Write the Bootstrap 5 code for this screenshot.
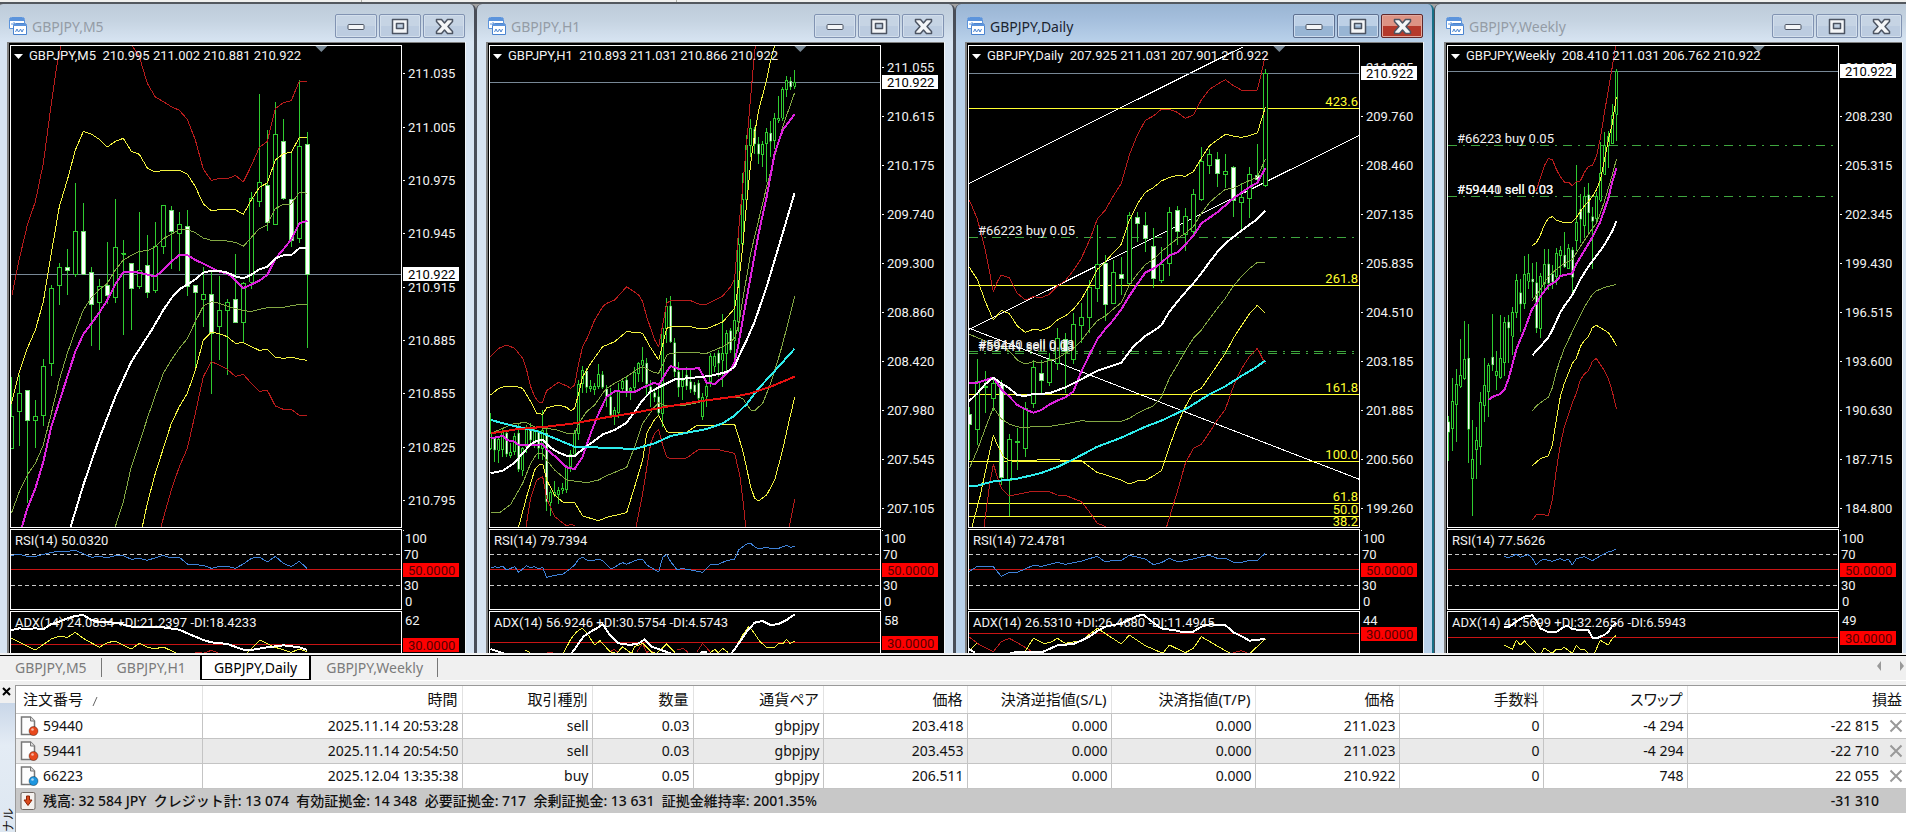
<!DOCTYPE html>
<html lang="ja">
<head>
<meta charset="utf-8">
<meta name="viewport" content="width=device-width, initial-scale=1">
<title>GBPJPY,Daily</title>
<link rel="stylesheet" href="https://cdn.jsdelivr.net/npm/bootstrap@5.3.0/dist/css/bootstrap.min.css">
<script src="https://cdn.jsdelivr.net/npm/bootstrap@5.3.0/dist/js/bootstrap.bundle.min.js"></script>
<style>
body{font-family:"Noto Sans","Noto Sans CJK JP",sans-serif;font-size:14px;line-height:20px;color:#111;background:#fff}
button{font:inherit;color:inherit}
.strip{height:2px;background:#f0f0ee}
.strip span{width:1px;background:#b0b0a8;margin-left:361px}
.strip span+span{margin-left:314px}
.mdi{height:653px;background:#a4a4a4;border-top:2px solid #53585e;border-bottom:2px solid #f4f4f4}
.desk{display:grid;grid-template-columns:repeat(4,minmax(0,1fr));margin:0 -7px 0 -3px;height:649px}
.win{border:solid #484d57;border-width:0 2px 0 1px;border-radius:6px 6px 0 0;background:linear-gradient(#becbd9,#c5d3e1 16px,#d7e4f2 38px);padding:0 9px}
.win.on{background:linear-gradient(#9ab5d3,#a5bfdd 16px,#b9d1ea 38px);border-right-color:#176f86}
.tbar{height:38px;padding-top:10px}
.tico{margin:3px 5px 0 2px}
.cap{color:#949ca6;line-height:26px}
.on .cap{color:#1b2430}
.wbtn{width:42px;height:24px;border:1px solid #8193b2;border-radius:2px;background:linear-gradient(#c6d4e4 50%,#bccce0 50%);box-shadow:inset 0 0 0 1px #d3dfec}
.on .wbtn{border-color:#5e7090;background:linear-gradient(#bdd0e6 50%,#98b5d4 50%);box-shadow:inset 0 0 0 1px #cddcee}
.on .wbtn.shut{border-color:#60272a;background:linear-gradient(#dd9384 50%,#b5392b 50%);box-shadow:inset 0 0 0 1px #e3a99e}
.board{background:#000;border:solid #808080;border-width:1px 0 0 2px;box-shadow:1px 0 #f2f6fa;padding:2px 0 0 1px;height:611px}
.plot{min-width:0}
.axis{width:63px}
.pane{border:1px solid #fff;margin-bottom:1px;overflow:hidden}
.axis .pane{border-color:transparent}
.p1{height:483px}.p2{height:81px}.p3{height:42px;border-bottom:0;margin:0}
.pane svg{display:block;width:100%;height:100%;overflow:hidden}
.axis .pane svg{overflow:visible}
svg text{font-family:Roboto,"Liberation Sans",sans-serif;font-size:13px;fill:#f2f2f2;white-space:pre}
svg .fib{fill:#ffff30;text-anchor:end}
.lines{shape-rendering:crispEdges;fill:none;stroke-linejoin:round}
.tabs{height:25px;border-top:1px solid #000;background:#f0f0f0}
.tab{border:0;background:none;padding:0 14px 0 15px;color:#7b7b7b;height:19px;line-height:19px;margin-top:2px;border-right:1px solid #777;text-decoration:none}
.tab.sel{background:#fff;color:#000;border:solid #000;border-width:0 2px 1px;height:24px;margin-top:0;padding:0 12px;line-height:23px}
.tab.pre{border-right:0}
.splitter{height:5px;background:#f0f0f0;border-top:1px solid #fff}
.side{width:15px;background:linear-gradient(#f0f0f0 18px,#c9d7e8 18px,#e4ecf5 60px,#dde7f1)}
.side button{border:0;background:none;padding:0;height:12px;width:12px}
.side span{writing-mode:vertical-rl;text-orientation:sideways;transform:rotate(180deg);font-family:"Noto Sans CJK JP",sans-serif;font-size:12px;line-height:15px;height:24px}
.term{border-left:1px solid #999;border-top:1px solid #999;min-height:147px}
.deals{table-layout:fixed;width:100%;border-collapse:collapse;white-space:nowrap}
.deals th,.deals td{text-align:right;padding:0 3px 0 4px;font-weight:400;border-right:1px solid #c4c4c4;border-bottom:1px solid #c4c4c4;height:25px;line-height:20px}
.deals th{height:27px;border-right-color:#e2e2e2;padding-right:4px;font-size:15px;font-feature-settings:"palt"}
.deals th:first-child,.deals td:first-child{text-align:left;padding-left:4px}
.deals th:first-child{padding-left:7px}
.deals th:last-child,.deals td:last-child{border-right:0}
.deals tr.alt td{background:#eaeaea}
.deals tfoot td{background:#c8c8c8;border:0;font-weight:500}
.deals .kill{border:0;background:none;padding:0;width:14px;height:14px;margin-left:10px;display:inline-flex}
.deals tfoot td:last-child{padding-right:27px}
.idc{width:20px;height:20px;margin-right:3px}
</style>
</head>
<body class="vh-100 overflow-hidden">
<main class="d-flex flex-column">
<div class="strip d-flex"><span></span><span></span></div>
<div class="mdi overflow-hidden"><div class="desk" id="desk"></div></div>
<nav class="tabs d-flex align-items-start" aria-label="charts">
<a href="#w0" class="tab">GBPJPY,M5</a>
<a href="#w1" class="tab pre">GBPJPY,H1</a>
<a href="#w2" class="tab sel">GBPJPY,Daily</a>
<a href="#w3" class="tab">GBPJPY,Weekly</a>
<svg class="ms-auto" width="34" height="20" aria-hidden="true"><path d="M9 5v10l-4-5zM28 5v10l4-5z" fill="#999"/></svg>
</nav>
<div class="splitter"></div>
<section class="d-flex">
<div class="side d-flex flex-column justify-content-between align-items-center">
<button type="button" aria-label="閉じる" class="d-flex"><svg width="10" height="12"><path d="M1 3l7 7M8 3l-7 7" stroke="#000" stroke-width="2"/></svg></button>
<span>ナル</span>
</div>
<div class="term flex-grow-1">
<table class="deals">
<colgroup><col style="width:186px"><col style="width:260px"><col style="width:130px"><col style="width:101px"><col style="width:130px"><col style="width:144px"><col style="width:144px"><col style="width:144px"><col style="width:144px"><col style="width:144px"><col style="width:144px"><col></colgroup>
<thead><tr><th>注文番号 <svg class="ms-1" width="8" height="12"><path d="M2 11l4-9" stroke="#666"/></svg></th><th>時間</th><th>取引種別</th><th>数量</th><th>通貨ペア</th><th>価格</th><th>決済逆指値(S/L)</th><th>決済指値(T/P)</th><th>価格</th><th>手数料</th><th>スワップ</th><th>損益</th></tr></thead>
<tbody id="rows"></tbody>
<tfoot><tr><td colspan="11"><div class="d-flex align-items-center"><svg class="idc" viewBox="0 0 20 20"><rect x="1" y="1.500" width="14" height="17" rx="1.500" fill="#f4f1ee" stroke="#6f6660"/><path d="M6.500 5h3v4h2.500l-4 5.500-4-5.500h2.500z" fill="#dd4a1c" stroke="#8c2406"/></svg><span style="white-space:pre">残高: 32 584 JPY  クレジット計: 13 074  有効証拠金: 14 348  必要証拠金: 717  余剰証拠金: 13 631  証拠金維持率: 2001.35%</span></div></td><td>-31 310</td></tr></tfoot>
</table>
</div>
</section>
</main>
<script>
// Chart data is kept on a grid of three units per pixel; x starts at `left`, y at 138.
// Candle: x, high, low, body top, body bottom, 1 = falling (filled).
const R='#b81c1c',Y='#f4f440',O='#84a844',M='#dc22dc',W='#fff',A='#2eecec';
const charts=[
{name:'GBPJPY,M5',q:'210.995 211.002 210.881 210.922',left:33,cw:12,tri:964,price:824,
ticks:[[221,'211.035'],[383,'211.005'],[542,'210.975'],[701,'210.945'],[863,'210.915'],[1022,'210.885'],[1180,'210.855'],[1342,'210.825'],[1501,'210.795']],
rsi:'RSI(14) 50.0320',adx:'ADX(14) 24.0834 +DI:21.2397 -DI:18.4233',top:'62',lv:1933,
c:`34,1132,1345,1249,1345,0 58,1125,1338,1180,1235,0 82,1170,1508,1171,1262,1 106,1200,1344,1249,1262,0 130,1077,1278,1098,1247,0 154,855,1127,865,1091,0 178,788,914,802,857,0 202,747,884,802,812,1 226,548,830,694,822,0 250,608,822,694,822,1 274,801,1038,817,913,1 298,836,1050,859,908,0 322,726,912,857,886,1 346,597,908,742,892,0 370,720,1005,760,762,0 394,790,990,790,866,1 418,636,866,812,860,0 442,705,893,796,878,1 466,666,878,740,872,0 490,615,762,616,740,0 514,618,808,631,694,1 538,636,812,673,700,0 562,630,887,679,860,1 586,857,1108,857,878,1 610,800,980,883,899,0 634,815,1181,883,1000,1 658,828,1080,931,980,0 682,897,1125,907,931,0 706,762,968,898,968,1 730,845,1030,850,968,0 754,576,866,595,846,0 778,282,620,547,605,0 802,390,692,555,668,1 826,306,674,403,674,0 850,357,600,424,596,1 874,455,740,598,722,1 898,240,728,439,716,0 922,396,1044,433,824,1`,
l:[[R,3,'36,885 56,785 82,675 106,605 130,490 154,310 170,200 183,136'],
[R,3,'396,136 418,170 442,250 466,291 490,305 514,320 538,331 562,358 586,420 610,508 634,541 658,535 686,535 706,526 730,546 754,497 778,442 802,424 826,326 850,308 874,302 898,243 922,243'],
[Y,3,'34,1212 58,1115 82,1045 106,990 130,905 154,760 178,620 202,540 226,450 250,394 274,402 298,418 322,441 346,424 370,415 394,454 418,463 442,504 466,516 490,511 514,513 538,511 562,522 586,560 610,612 634,632 658,629 706,629 730,643 754,600 778,562 802,549 826,480 850,461 874,457 898,412 922,412'],
[O,3,'34,1540 58,1475 82,1425 106,1390 130,1335 154,1240 178,1140 202,1060 226,992 250,930 274,893 298,868 322,850 346,810 370,780 394,766 418,754 442,752 466,740 490,716 514,703 538,688 562,688 586,698 610,714 634,721 682,723 706,727 730,739 754,712 778,686 802,674 826,626 850,613 874,612 898,577 922,580'],
[O,3,'346,1580 370,1505 394,1400 418,1330 442,1255 466,1185 490,1120 514,1080 538,1045 562,1016 586,965 610,918 634,905 658,910 682,918 706,926 730,932 754,934 778,928 802,923 850,922 898,913 922,913'],
[Y,3,'427,1580 442,1510 466,1420 490,1345 514,1270 538,1220 562,1180 586,1110 610,1020 634,996 658,1001 682,1010 706,1030 730,1028 754,1040 778,1051 802,1048 826,1072 850,1075 874,1072 898,1077 922,1081'],
[R,3,'483,1580 514,1470 538,1400 562,1345 586,1240 610,1130 634,1085 658,1095 682,1108 706,1129 730,1123 754,1150 778,1174 802,1171 826,1218 850,1228 874,1228 898,1246 922,1246'],
[M,6,'66,1580 82,1525 106,1465 130,1385 154,1280 178,1205 202,1130 226,1055 250,1003 298,938 322,900 346,853 370,817 394,816 418,818 442,824 466,829 490,810 514,785 538,765 562,765 586,780 610,791 634,803 658,815 682,820 706,840 730,864 754,854 778,842 802,824 826,776 850,748 874,718 898,670 922,662'],
[W,6,'212,1580 250,1455 298,1315 346,1190 394,1085 455,990 490,930 514,895 538,868 562,853 586,838 610,818 634,812 658,813 682,818 706,829 730,835 754,824 778,808 802,800 826,775 850,766 874,765 898,745 922,743']],
r:'34,1666 58,1663 82,1669 106,1669 154,1657 178,1654 202,1654 226,1651 250,1661 274,1672 298,1669 322,1673 346,1667 370,1667 394,1678 418,1675 442,1681 490,1666 514,1674 538,1672 562,1692 610,1696 634,1705 658,1699 682,1699 706,1705 730,1692 754,1675 778,1671 802,1686 826,1669 850,1690 874,1700 898,1684 922,1706',
a:[[R,3,'585,1959 600,1957 610,1960 634,1951 655,1959'],[Y,3,'34,1915 82,1938 106,1950 154,1917 178,1909 202,1912 226,1897 250,1915 298,1942 322,1928 346,1923 394,1947 418,1930 442,1942 466,1946 490,1941 530,1960'],[Y,3,'740,1960 780,1920 820,1940 874,1957 898,1947 922,1956'],
[W,6,'34,1890 58,1885 82,1887 106,1885 130,1888 154,1872 178,1865 202,1855 226,1848 250,1845 274,1860 298,1866 346,1868 394,1880 490,1882 538,1889 562,1900 610,1920 634,1927 682,1932 730,1949 754,1950 802,1942 850,1936 898,1942 922,1950']]},
{name:'GBPJPY,H1',q:'210.893 211.031 210.866 210.922',left:60,cw:6,tri:991,price:247,
ticks:['211.055','210.615','210.175','209.740','209.300','208.860','208.420','207.980','207.545','207.105'],
rsi:'RSI(14) 79.7394',adx:'ADX(14) 56.9246 +DI:30.5754 -DI:4.5743',top:'58',lv:1927,
c:`62,1240,1350,1300,1345,0 74,1310,1385,1315,1350,1 86,1308,1390,1318,1350,0 98,1285,1370,1298,1348,0 110,1295,1370,1300,1362,1 122,1330,1375,1358,1366,0 134,1300,1365,1308,1355,0 146,1268,1415,1300,1408,1 158,1340,1428,1345,1410,0 170,1275,1358,1285,1340,0 182,1270,1335,1285,1320,1 194,1285,1345,1290,1325,0 206,1290,1378,1295,1345,1 218,1230,1380,1290,1345,0 230,1285,1533,1300,1505,1 242,1470,1548,1478,1506,0 254,1442,1490,1476,1484,0 266,1460,1512,1470,1484,0 278,1450,1482,1465,1470,0 290,1395,1478,1402,1468,0 302,1350,1415,1362,1400,0 314,1290,1370,1300,1362,0 326,1140,1320,1152,1300,0 338,1098,1180,1112,1150,0 350,1103,1178,1114,1162,1 362,1140,1175,1160,1166,0 374,1150,1185,1160,1168,0 386,1093,1168,1124,1160,0 398,1112,1168,1124,1162,1 410,1155,1220,1168,1190,1 422,1165,1248,1190,1245,1 434,1220,1275,1232,1250,0 446,1150,1255,1170,1238,0 458,1138,1180,1145,1165,0 470,1130,1190,1140,1178,1 482,1160,1200,1166,1172,0 494,1100,1175,1118,1162,0 506,1085,1145,1090,1120,0 518,1042,1145,1080,1095,0 530,1075,1190,1090,1152,1 542,1140,1220,1160,1175,1 554,1165,1205,1178,1192,1 566,1165,1245,1190,1238,1 578,980,1280,985,1240,0 590,893,1030,918,985,0 602,888,1030,918,1025,1 614,1015,1130,1028,1115,1 626,1085,1190,1115,1162,1 638,1110,1200,1140,1160,0 650,1100,1170,1125,1158,1 662,1110,1178,1145,1168,1 674,1145,1185,1155,1175,1 686,1140,1205,1150,1195,1 698,1180,1260,1192,1250,0 710,1140,1220,1160,1188,0 722,1060,1160,1070,1145,0 734,1058,1115,1070,1098,0 746,1050,1130,1060,1090,1 758,942,1160,1060,1080,0 770,990,1120,1000,1060,0 782,985,1060,992,1050,1 794,835,1080,960,1020,0 806,690,995,732,965,0 818,520,735,598,732,0 830,405,600,436,598,0 842,357,470,384,436,0 854,382,462,388,432,1 866,412,492,432,462,1 878,422,502,432,464,0 890,385,545,396,430,0 902,362,472,400,424,1 914,340,448,354,422,0 926,288,370,354,360,0 938,262,362,268,354,0 950,228,290,240,268,0 962,232,270,244,260,1 974,210,268,248,258,0`,
l:[[R,3,'62,1070 86,1045 110,1035 134,1045 158,1075 170,1110 182,1160 194,1190 206,1206 218,1206 230,1172 254,1155 266,1147 290,1158 302,1165 314,1155 326,1090 338,1040 350,1018 374,960 398,920 410,910 434,900 470,860 506,885 518,905 530,950 554,1020 566,1040 578,975 590,910 602,902 662,902 686,912 710,912 758,888 782,860 794,835 806,690 818,560 830,430 842,290 850,200 856,136'],
[Y,3,'62,1185 86,1165 110,1158 134,1158 158,1165 182,1205 200,1240 218,1243 230,1223 266,1215 290,1222 302,1232 314,1225 326,1180 338,1130 362,1090 398,1040 434,1025 470,995 506,998 518,1000 540,1040 566,1080 578,1035 590,985 606,978 662,980 686,986 710,986 758,966 794,925 806,850 818,740 830,610 842,490 854,400 866,330 890,240 902,180 914,136'],
[O,3,'62,1300 86,1290 98,1285 134,1270 170,1268 200,1283 230,1285 260,1290 290,1300 314,1302 326,1270 350,1235 374,1215 398,1180 410,1165 434,1150 470,1130 506,1105 518,1100 554,1118 566,1120 578,1095 590,1065 602,1060 650,1057 710,1060 758,1040 782,1025 794,1015 806,975 818,900 842,760 866,660 890,560 914,470 938,380 974,278'],
[O,3,'62,1538 90,1537 122,1513 158,1450 182,1390 200,1362 218,1360 230,1380 254,1410 290,1440 350,1448 386,1440 410,1427 470,1402 494,1340 518,1270 554,1220 566,1208 590,1218 640,1217 710,1202 794,1190 818,1195 842,1230 854,1232 878,1210 902,1150 930,1060 950,985 974,888'],
[Y,3,'146,1580 170,1490 194,1410 206,1395 218,1392 230,1440 254,1485 278,1506 314,1508 338,1548 386,1562 410,1552 470,1538 494,1460 518,1380 530,1300 554,1258 566,1246 578,1270 590,1295 602,1298 650,1297 682,1275 740,1275 794,1273 818,1350 842,1460 854,1495 866,1503 890,1485 914,1440 938,1350 958,1260 974,1192'],
[R,3,'168,1580 182,1495 200,1440 218,1430 230,1495 254,1550 290,1578 302,1573 314,1576'],[R,3,'498,1580 518,1480 542,1330 554,1300 566,1288 578,1335 590,1370 602,1376 650,1374 686,1348 740,1348 794,1360 810,1430 820,1510 827,1580'],[R,3,'958,1580 974,1498'],
[M,6,'62,1315 98,1308 110,1320 134,1325 146,1335 182,1335 218,1333 230,1348 266,1378 290,1402 314,1407 338,1370 362,1300 386,1240 410,1190 434,1174 494,1176 518,1163 554,1148 566,1155 590,1115 602,1098 626,1107 662,1107 686,1104 698,1125 710,1148 734,1152 758,1132 782,1110 794,1085 806,1030 818,960 842,830 866,700 890,590 914,460 938,390 974,343'],
[W,6,'62,1420 98,1412 134,1388 158,1360 182,1333 200,1322 218,1320 242,1343 266,1358 290,1367 314,1368 350,1338 374,1322 398,1303 434,1290 470,1268 494,1235 518,1200 542,1175 590,1150 614,1138 650,1135 720,1128 770,1116 794,1100 806,1070 830,1020 854,965 890,860 914,780 938,700 974,578'],
[A,6,'62,1260 120,1275 206,1295 266,1320 314,1340 398,1343 494,1347 554,1330 602,1308 662,1296 710,1287 758,1270 794,1247 830,1212 866,1165 914,1113 974,1046'],
['#e81010',6,'62,1300 146,1287 230,1280 314,1270 398,1254 494,1238 590,1220 686,1204 794,1190 842,1180 902,1160 974,1130']],
r:'62,1704 74,1700 86,1703 98,1698 110,1710 134,1700 146,1717 170,1697 182,1703 194,1700 206,1707 218,1702 230,1732 254,1726 278,1723 302,1705 314,1695 326,1677 338,1672 350,1680 362,1683 386,1678 398,1682 422,1706 434,1702 446,1693 458,1688 470,1693 494,1682 506,1678 518,1678 530,1695 566,1716 578,1672 590,1664 602,1685 620,1708 638,1706 662,1710 698,1717 722,1694 746,1692 770,1682 794,1677 806,1650 830,1632 842,1630 854,1640 866,1647 890,1641 902,1647 926,1645 950,1636 962,1642 974,1638',
a:[[R,3,'230,1957 250,1958'],[R,3,'420,1956 432,1948 445,1958'],[R,3,'500,1957 518,1930 530,1958 540,1950 550,1958'],[R,3,'620,1950 640,1945 655,1958'],[R,3,'680,1957 698,1930 720,1955'],
[Y,3,'165,1950 180,1957'],[Y,3,'280,1960 302,1918 320,1895 336,1885 350,1898 374,1935 390,1922 420,1955 440,1960 458,1940 470,1950 485,1960 494,1940 518,1930 545,1957 560,1960 590,1932 615,1958'],[Y,3,'720,1958 735,1948 745,1958 758,1945 775,1958'],[Y,3,'790,1955 818,1905 836,1880 850,1895 870,1925 890,1942 914,1942 926,1930 938,1932 950,1918 960,1930 974,1924'],
[W,6,'62,1947 100,1960'],[W,6,'305,1960 340,1910 362,1895 380,1885 398,1873 420,1905 446,1930 480,1935 506,1930 524,1918 545,1940 602,1960'],[W,6,'690,1958 710,1955'],[W,6,'785,1960 810,1925 830,1895 854,1868 878,1863 902,1875 926,1872 950,1860 974,1843']]},
{name:'GBPJPY,Daily',on:1,q:'207.925 211.031 207.901 210.922',left:57,cw:12,tri:988,price:220,
ticks:['211.085','209.760','208.460','207.135','205.835','204.510','203.185','201.885','200.560','199.260'],
rsi:'RSI(14) 72.4781',adx:'ADX(14) 26.5310 +DI:26.4680 -DI:11.4945',top:'44',lv:1900,
fib:[[325,'423.6'],[856,'261.8'],[1183,'161.8'],[1384,'100.0'],[1510,'61.8'],[1549,'50.0'],[1585,'38.2']],
ord:[[712,'#66223 buy 0.05'],[1055,'#59440 sell 0.03'],[1060,'#59441 sell 0.03']],
trend:['58,550 880,140','58,988 1228,406','58,985 1228,1438'],
c:`58,1220,1380,1243,1273,1 82,1077,1335,1143,1288,0 106,1112,1240,1160,1162,0 130,1130,1232,1150,1195,0 154,1140,1455,1153,1433,1 178,1303,1548,1317,1440,0 202,1285,1410,1324,1327,0 226,1205,1370,1225,1345,0 250,1080,1225,1102,1210,0 274,1080,1180,1120,1142,1 298,1060,1158,1078,1148,0 322,985,1110,1015,1090,0 346,998,1180,1018,1053,1 370,938,1093,972,1078,0 394,910,1030,951,976,0 418,840,1000,862,952,0 442,675,906,794,866,0 466,765,962,790,914,1 490,780,912,817,910,0 514,770,884,822,836,1 538,636,852,646,850,0 562,636,726,651,670,1 586,636,755,676,715,1 610,685,863,740,836,1 634,742,848,794,842,0 658,620,828,636,790,0 682,618,735,630,694,1 706,625,752,650,704,0 730,567,708,583,694,0 754,441,604,484,598,0 778,446,521,462,496,0 802,456,560,478,520,1 826,462,564,514,524,0 850,498,650,502,600,1 874,548,688,592,608,0 898,502,654,522,596,0 922,432,550,526,538,1 946,207,560,220,556,0`,
l:[[R,3,'58,600 82,657 106,750 130,875 142,845 154,825 178,833 202,880 226,900 250,890 274,893 298,883 322,858 346,842 370,812 394,775 418,722 442,657 466,630 490,588 514,550 538,465 562,405 586,361 610,348 634,328 658,328 682,337 706,355 730,345 754,300 778,268 802,253 826,239 850,257 874,270 898,273 922,270 934,220 946,165'],
[Y,3,'58,802 82,838 106,905 130,960 154,931 178,941 202,978 226,997 250,988 274,991 298,982 322,960 346,948 370,928 394,898 418,856 442,808 466,785 490,758 514,733 538,660 562,612 586,577 610,563 634,543 658,532 682,526 706,529 730,515 754,475 778,438 802,420 826,403 850,408 874,412 898,407 922,399 946,322'],
[O,3,'58,1003 100,1020 130,1035 154,1040 178,1053 202,1080 226,1092 250,1085 274,1088 298,1082 322,1075 370,1045 394,1022 418,990 442,962 466,948 490,927 514,908 538,855 562,822 586,794 610,778 634,755 658,735 682,716 706,700 730,680 754,640 778,608 802,587 826,568 850,565 874,553 898,542 922,530 946,478'],
[O,3,'58,1405 82,1350 106,1285 130,1222 154,1257 178,1272 202,1280 226,1284 250,1279 298,1279 346,1272 394,1262 442,1266 514,1264 538,1255 562,1240 586,1228 610,1218 634,1192 658,1135 682,1095 706,1053 730,1015 754,990 778,957 802,925 826,895 850,858 874,830 898,806 922,787 946,787'],
[Y,3,'66,1580 90,1490 106,1415 130,1306 142,1335 160,1370 178,1382 226,1381 298,1379 394,1382 418,1400 442,1418 466,1424 490,1432 514,1440 538,1452 562,1443 586,1441 610,1428 634,1412 658,1340 682,1275 706,1220 730,1178 754,1165 778,1130 802,1095 826,1060 850,1015 874,978 898,942 922,916 946,940'],
[R,3,'102,1580 118,1460 130,1393 142,1430 154,1465 178,1488 202,1483 226,1478 250,1474 298,1475 322,1485 346,1486 394,1505 418,1535 442,1570 468,1580'],[R,3,'650,1580 682,1475 706,1390 730,1345 754,1333 778,1298 802,1260 826,1228 850,1160 874,1107 898,1070 922,1045 946,1092'],
[M,6,'56,1150 82,1148 130,1133 154,1168 178,1190 202,1215 226,1228 250,1238 274,1230 298,1214 322,1202 346,1192 370,1175 394,1115 418,1065 442,1018 466,987 490,960 514,928 538,888 562,852 586,818 610,806 634,788 658,767 682,757 706,733 730,708 754,670 802,637 850,595 898,562 922,548 946,505'],
[W,6,'56,1205 82,1180 106,1152 130,1133 154,1150 178,1165 202,1185 226,1188 250,1182 298,1180 346,1162 394,1138 442,1112 514,1088 550,1040 586,1008 610,993 634,976 658,935 682,905 706,877 730,850 754,820 778,787 802,756 826,730 874,692 922,657 946,632'],
[A,6,'56,1458 82,1457 130,1444 202,1436 274,1419 322,1401 370,1378 442,1340 514,1313 586,1280 634,1262 706,1228 778,1183 826,1159 874,1128 910,1107 946,1082']],
r:'58,1714 82,1699 106,1701 130,1700 142,1715 154,1729 178,1717 202,1717 250,1696 274,1699 322,1687 346,1693 370,1688 394,1684 418,1676 442,1669 466,1686 490,1681 514,1681 538,1666 586,1677 610,1694 634,1688 658,1675 682,1685 706,1682 754,1671 778,1666 802,1675 826,1675 850,1687 874,1687 898,1681 922,1681 946,1660',
a:[[R,3,'56,1910 90,1935 130,1955 154,1925 178,1915 202,1928 250,1957'],[R,3,'850,1958 874,1952 890,1958'],
[Y,3,'56,1955 80,1930'],[Y,3,'225,1955 250,1915 280,1930 300,1928 322,1915 346,1930 394,1922 442,1885 514,1932 538,1905 586,1937 634,1958 640,1958 658,1935 706,1958 730,1945 754,1910 802,1938 840,1960'],[Y,3,'900,1960 946,1917'],
[W,6,'56,1947 75,1958'],[W,6,'180,1958 226,1956 280,1955 322,1936 370,1932 394,1922 418,1910 442,1893 466,1880 514,1870 562,1848 580,1844 610,1868 634,1885 682,1892 700,1897 730,1895 754,1880 778,1873 826,1875 850,1897 874,1908 898,1922 946,1917']]},
{name:'GBPJPY,Weekly',q:'208.410 211.031 206.762 210.922',left:66,cw:6,tri:998,price:214,
ticks:['211.145','208.230','205.315','202.345','199.430','196.515','193.600','190.630','187.715','184.800'],
rsi:'RSI(14) 77.5626',adx:'ADX(14) 41.5699 +DI:32.2656 -DI:6.5943',top:'49',lv:1912,
ord:[[436,'#66223 buy 0.05'],[590,'#59440 sell 0.03'],[590,'#59441 sell 0.03']],
c:`67,1248,1382,1265,1297,1 79,1134,1352,1203,1286,0 91,1108,1325,1153,1213,0 103,1018,1165,1125,1158,0 115,964,1140,1078,1136,0 127,972,1388,1075,1288,1 139,1260,1548,1378,1436,0 151,1282,1436,1320,1348,0 163,1175,1394,1206,1340,0 175,1075,1266,1156,1216,0 187,1090,1250,1096,1175,0 199,942,1112,1072,1094,1 211,1053,1170,1114,1126,0 223,946,1136,1075,1133,0 235,950,1128,966,1088,0 247,945,1088,966,984,1 259,922,1065,938,1008,0 271,822,955,840,938,0 283,836,995,878,912,1 295,768,928,822,910,0 307,762,868,820,843,0 319,790,893,838,845,1 331,785,998,848,984,1 343,818,1013,828,986,0 355,746,880,792,850,0 367,748,870,792,850,1 379,795,866,822,845,1 391,744,855,760,830,0 403,737,828,752,766,0 415,696,805,766,800,1 427,733,808,745,806,0 439,740,885,750,832,1 451,495,752,668,722,0 463,583,730,628,658,1 475,560,715,590,676,0 487,548,700,584,638,1 499,620,808,650,664,1 511,575,672,588,656,0 523,425,605,520,600,0 535,397,525,436,522,0 547,392,505,410,436,0 559,312,432,345,430,0 571,207,424,214,342,0`,
l:[[R,3,'319,570 331,572 343,535 355,497 367,476 379,478 391,508 403,530 415,546 427,546 439,558 451,545 463,543 475,518 487,500 499,496 511,470 523,415 535,340 547,270 559,200 569,138'],
[Y,3,'319,737 331,728 343,706 355,675 367,655 379,650 391,660 415,669 439,666 451,652 475,618 499,590 511,570 523,540 535,480 547,420 559,370 571,292'],
[O,3,'319,903 343,868 367,830 391,808 415,790 439,778 463,740 487,703 511,670 523,640 535,605 547,565 559,525 571,478'],
[O,3,'319,1232 331,1218 355,1200 367,1192 379,1163 391,1115 403,1078 415,1045 439,995 451,970 475,922 499,883 511,873 535,862 571,853'],
[Y,3,'319,1397 343,1376 367,1368 379,1335 391,1260 403,1190 415,1150 439,1090 451,1075 463,1040 475,1022 487,1010 499,983 511,976 535,990 547,998 559,1015 571,1037'],
[R,3,'319,1560 331,1544 355,1544 367,1548 379,1500 391,1410 403,1335 415,1280 439,1208 451,1180 463,1140 475,1122 487,1112 499,1085 511,1075 523,1093 535,1112 547,1135 559,1175 571,1226'],
[M,6,'187,1200 199,1191 223,1182 235,1170 247,1138 259,1095 271,1048 295,990 319,925 331,912 343,890 367,858 391,843 403,828 439,820 451,792 475,752 499,712 523,665 547,595 559,545 571,505'],
[W,6,'319,1066 343,1040 367,1012 379,990 403,937 415,918 439,885 463,838 487,800 511,768 535,735 559,693 571,664']],
r:'235,1669 247,1673 259,1669 271,1662 283,1672 307,1664 319,1675 331,1695 343,1682 355,1678 379,1684 403,1676 415,1682 427,1677 439,1695 451,1676 475,1670 499,1682 523,1668 547,1656 559,1653 571,1647',
a:[[Y,3,'235,1935 259,1948 271,1921 283,1935 295,1923 331,1960'],[Y,3,'345,1960 355,1944 379,1960 391,1948 403,1950 415,1942 439,1960 451,1935 463,1948 475,1948 487,1960'],[Y,3,'505,1960 523,1921 547,1935 559,1915 571,1906'],
[W,6,'235,1880 250,1880 271,1865 295,1850 319,1846 331,1862 343,1885 367,1896 391,1896 415,1880 427,1878 439,1888 487,1890 499,1913 511,1915 535,1905 547,1895 559,1878 571,1868']]}
];
const T=[138,1590,1836];
const at=(y,p)=>Math.floor((y-T[p])/3);
const poly=([c,w,p])=>`<polyline stroke="${c}" stroke-width="${w}" points="${p}"/>`;
const lines=(k,p,s)=>`<g class="lines" transform="scale(${1/3}) translate(${-k.left} ${-T[p]})">${s}</g>`;
const hl=(y,c,x='')=>`<line x1="0" x2="100%" y1="${y}.5" y2="${y}.5" stroke="${c}" shape-rendering="crispEdges" ${x}/>`;
const txt=(x,y,s,x2='')=>`<text x="${x}" y="${y}" ${x2}>${s}</text>`;
const tag=(y,s,bg,fg)=>`<rect x="0" y="${y-7}" width="56" height="14" fill="${bg}"/>`+txt(5,y+5,s,`style="fill:${fg}"`);
const candle=(k,d)=>{const[x,h,l,t,b,f]=d.split(',').map(Number),w=k.cw;
 const X=k.left+Math.floor((x-k.left)/3)*3+1.5;
 return `<path d="M${X} ${h}V${t}M${X} ${b}V${l}" stroke="#30cc30" stroke-width="3"/><rect x="${X-w/2}" y="${t}" width="${w}" height="${Math.max(b-t,2)}" fill="${f?'#fff':'#000'}" stroke="${f&&w>6?'#6fe06f':'#30cc30'}" stroke-width="${f&&w<=6?2:3}"/>`};
const mainPane=k=>{let s='';
 s+=lines(k,0,(k.trend||[]).map(p=>poly([W,3,p])).join(''));
 s+=hl(at(k.price,0),'#788896');
 (k.fib||[]).forEach(f=>{if(f[0]<1580)s+=hl(at(f[0],0),'#ffff30')});
 (k.ord||[]).forEach(o=>s+=hl(at(o[0],0),'#3fa63f','stroke-dasharray="9 6 2 6"'));
 s+=lines(k,0,k.c.split(' ').map(d=>candle(k,d)).join('')+k.l.map(poly).join(''));
 s+=`<svg x="100%" overflow="visible" style="overflow:visible">${(k.fib||[]).map(f=>txt(-1,at(f[0],0)-2,f[1],'class="fib"')).join('')}</svg>`;
 (k.ord||[]).forEach(o=>s+=txt(9,at(o[0],0)-2,o[1]));
 const x=(k.tri-k.left)/3;
 s+=`<path d="M${x-6} 0h12l-6 6z" fill="#788896"/><path d="M3 8h9l-4.500 5z" fill="#fff"/>`+txt(18,14,k.name+'  '+k.q);
 return s};
const rsiPane=k=>hl(at(1663,1),'#c8c8c8','stroke-dasharray="4 3"')+hl(at(1756,1),'#c8c8c8','stroke-dasharray="4 3"')+hl(at(1708,1),'#c81414')+lines(k,1,poly(['#3f82d8',3,k.r]))+txt(4,15,k.rsi);
const adxPane=k=>hl(at(k.lv,2),'#c81414')+txt(4,15,k.adx)+lines(k,2,k.a.map(poly).join(''));
const axMain=k=>k.ticks.map((t,i)=>{const[y,s]=Array.isArray(t)?t:[203+Math.round(i*146.900),t];return `<path d="M-1 ${at(y,0)}.5h3" stroke="#fff"/>`+txt(5,at(y,0)+5,s)}).join('')+tag(at(k.price,0),'210.922','#fff','#000');
const axRsi=()=>'<path d="M-1 .5h2" stroke="#fff"/>'+txt(2,13,'100')+txt(1,29,'70')+txt(1,60,'30')+txt(2,76,'0')+tag(40,'50.0000','#f00','#500');
const axAdx=k=>txt(2,13,k.top)+tag(at(k.lv,2)+1,'30.0000','#f00','#500');
const icon='<svg width="18" height="18" aria-hidden="true"><path d="M.5 2.500q0-2 2-2h11q2 0 2 2v9h-15z" fill="#fff" stroke="#5c94dc"/><path d="M1 1h14v3H1z" fill="#5c94dc"/><path d="M3 8V6m2 3V5m3 3V6" stroke="#5c94dc"/><path d="M4.500 8.500q0-2 2-2h9q2 0 2 2v9h-13z" fill="#fff" stroke="#4a84d0"/><path d="M5 7h12v2H5z" fill="#5c94dc"/><path d="M6.500 15l1.500-3 1.500 3 1-1 1-2 1.500 3 1.500-3" fill="none" stroke="#4a84d0"/></svg>';
const btns=[['最小化','','<rect x="12" y="9.500" width="16" height="5" rx="1" fill="#f4f6f8" stroke="#4c5462"/>'],
['最大化','','<path fill-rule="evenodd" d="M12.500 4.500h15v14h-15zM16.500 8.500v5h7V8.500z" fill="#f4f6f8" stroke="#4c5462" stroke-width="1.500" stroke-linejoin="round"/>'],
['閉じる','shut','<path d="M12.500 4.500h5l3 3.500 3-3.500h5v2l-4.500 5 4.500 5v2h-5l-3-3.500-3 3.500h-5v-2l4.500-5-4.500-5z" fill="#f4f6f8" stroke="#4c5462" stroke-width="1.500" stroke-linejoin="round"/>']];
document.getElementById('desk').innerHTML=charts.map((k,i)=>`<section class="win ${k.on?'on':''}" id="w${i}"><header class="tbar d-flex align-items-start"><span class="d-flex tico">${icon}</span><span class="cap">${k.name}</span><span class="ms-auto d-flex" style="gap:2px">${btns.map(b=>`<button type="button" class="wbtn p-0 d-flex ${b[1]}" aria-label="${b[0]}"><svg width="40" height="22">${b[2]}</svg></button>`).join('')}</span></header><div class="board d-flex"><div class="plot flex-grow-1"><div class="pane p1"><svg>${mainPane(k)}</svg></div><div class="pane p2"><svg>${rsiPane(k)}</svg></div><div class="pane p3"><svg>${adxPane(k)}</svg></div></div><div class="axis"><div class="pane p1"><svg>${axMain(k)}</svg></div><div class="pane p2"><svg>${axRsi()}</svg></div><div class="pane p3"><svg>${axAdx(k)}</svg></div></div></div></section>`).join('');
const doc=c=>`<svg class="idc" viewBox="0 0 20 20"><path d="M1.500 1h9l4 4v13.500h-13z" fill="#fdfdfd" stroke="#777" stroke-width="1.500"/><path d="M10.500 1v4h4" fill="#ddd" stroke="#777"/><circle cx="13.500" cy="15" r="4.500" fill="${c}" stroke="#0005"/><circle cx="12.500" cy="13.500" r="1.300" fill="#fff9"/></svg>`;
document.getElementById('rows').innerHTML=[
['59440','2025.11.14 20:53:28','sell','0.03','gbpjpy','203.418','0.000','0.000','211.023','0','-4 294','-22 815'],
['59441','2025.11.14 20:54:50','sell','0.03','gbpjpy','203.453','0.000','0.000','211.023','0','-4 294','-22 710'],
['66223','2025.12.04 13:35:38','buy','0.05','gbpjpy','206.511','0.000','0.000','210.922','0','748','22 055']
].map((r,i)=>`<tr class="${i==1?'alt':''}">${r.map((v,j)=>j==0?`<td><div class="d-flex align-items-center">${doc(r[2]=='buy'?'#1d96e0':'#e8481c')}${v}</div></td>`:j==11?`<td><div class="d-flex align-items-center justify-content-end">${v}<button type="button" class="kill" aria-label="決済"><svg width="14" height="14"><path d="M1.500 1.500l11 11M12.500 1.500l-11 11" stroke="#999" stroke-width="2"/></svg></button></div></td>`:`<td>${v}</td>`).join('')}</tr>`).join('');
</script>
</body>
</html>
